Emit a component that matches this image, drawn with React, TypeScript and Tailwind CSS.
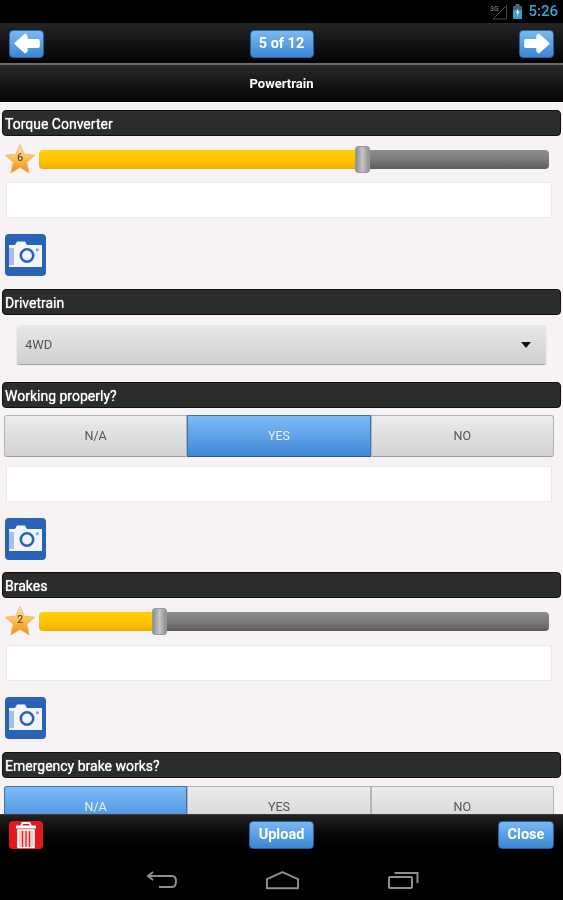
import React from 'react';

const SectionHeader: React.FC<{ title: string; className?: string }> = ({ title, className }) => (
  <div
    className={`mx-[2px] flex h-[26px] items-center rounded-[4px] border border-[#111111] bg-[#2b2d2a] pl-[2px] pt-[2px] text-[14px] leading-none text-white [text-shadow:0_0_1px_#fff] ${className ?? ''}`}
  >
    {title}
  </div>
);

const Star: React.FC<{ value: number }> = ({ value }) => (
  <div className="relative h-[30px] w-[30px] shrink-0">
    <svg viewBox="0 0 30 30" className="h-full w-full">
      <defs>
        <linearGradient id="starFill" x1="0" y1="0" x2="0" y2="1">
          <stop offset="0" stopColor="#fde9b0" />
          <stop offset="0.5" stopColor="#fbbd4f" />
          <stop offset="1" stopColor="#ef8a1c" />
        </linearGradient>
      </defs>
      <path
        d="M15 0.5 L19.2 10.2 L29.8 11.2 L21.8 18.2 L24.2 29 L15 23.4 L5.8 29 L8.2 18.2 L0.2 11.2 L10.8 10.2 Z"
        fill="url(#starFill)"
        stroke="#f4b45c"
        strokeWidth="0.8"
        strokeLinejoin="round"
      />
    </svg>
    <span className="absolute inset-0 flex items-center justify-center pb-[1px] text-[11px] text-[#4a3a20]">
      {value}
    </span>
  </div>
);

const RatingSlider: React.FC<{ value: number; percent: number; className?: string }> = ({
  value,
  percent,
  className,
}) => (
  <div className={`flex h-[30px] items-center pl-[5px] pr-[14px] ${className ?? ''}`}>
    <Star value={value} />
    <div className="relative ml-[4px] h-[19px] flex-1">
      <div className="flex h-full overflow-hidden rounded-[4px]">
        <div
          className="h-full bg-linear-to-b from-[#ffd000] via-[#ffc400] to-[#f2ae00]"
          style={{ width: `${percent}%` }}
        />
        <div className="h-full flex-1 bg-linear-to-b from-[#8e8f8d] via-[#7b7c7a] to-[#5c5d5b]" />
      </div>
      <div
        className="absolute top-[-4px] ml-[-8px] h-[27px] w-[15px] rounded-[3px] border border-[#9a9a9a] bg-linear-to-r from-[#8f8f8f] via-[#c6c6c6] to-[#8f8f8f]"
        style={{ left: `${percent}%` }}
      />
    </div>
  </div>
);

const NoteInput: React.FC<{ className?: string }> = ({ className }) => (
  <div className={`ml-[6px] mr-[11px] h-[36px] border border-[#ebe7eb] bg-white ${className ?? ''}`} />
);

const CameraButton: React.FC<{ className?: string }> = ({ className }) => (
  <div className={`ml-[5px] h-[42px] w-[41px] ${className ?? ''}`}>
    <svg viewBox="0 0 41 42" className="h-full w-full">
      <rect x="0" y="0" width="41" height="42" rx="4" fill="#2a62b8" />
      <path d="M4 11 H10 L12 7.5 H20 L22 11 H37 V33 H4 Z" fill="#f2f5fb" />
      <rect x="4" y="14" width="5" height="17" fill="#a9c0e4" />
      <circle cx="22" cy="21.5" r="6.2" fill="none" stroke="#2a62b8" strokeWidth="2.6" />
      <rect x="31" y="14.5" width="2.6" height="2.6" fill="#7d9fd6" />
    </svg>
  </div>
);

const Segments: React.FC<{ options: string[]; active: string; className?: string }> = ({
  options,
  active,
  className,
}) => (
  <div className={`ml-[4px] mr-[9px] flex h-[42px] shrink-0 ${className ?? ''}`}>
    {options.map((option, i) => (
      <div
        key={option}
        className={`flex flex-1 items-center justify-center border text-[12.5px] ${
          i === 0 ? 'rounded-l-[3px]' : ''
        } ${i === options.length - 1 ? 'rounded-r-[3px]' : ''} ${
          option === active
            ? 'border-[#3a72b4] border-b-[#1f5590] bg-linear-to-b from-[#7dbcf8] to-[#3f88d6] text-[#e6f2ff]'
            : 'border-[#b4b4b4] border-b-[#9a9a9a] bg-linear-to-b from-[#ececec] to-[#d2d2d2] text-[#555555]'
        }`}
      >
        {option}
      </div>
    ))}
  </div>
);

const BlueButton: React.FC<{ children: React.ReactNode; className?: string }> = ({
  children,
  className,
}) => (
  <div
    className={`flex items-center justify-center rounded-[4px] border border-[#2a5f9e] bg-linear-to-b from-[#7ab9f2] to-[#3a86d6] font-bold text-white ${className ?? ''}`}
  >
    {children}
  </div>
);

const ArrowIcon: React.FC<{ flip?: boolean }> = ({ flip }) => (
  <svg viewBox="0 0 30 24" className={`h-[23px] w-[28px] ${flip ? 'scale-x-[-1]' : ''}`}>
    <path
      d="M2 12 L13 2 L15 4 V8 H27 Q28 8 28 9 V15 Q28 16 27 16 H15 V20 L13 22 Z"
      fill="#ffffff"
      stroke="#ffffff"
      strokeWidth="1.4"
      strokeLinejoin="round"
    />
  </svg>
);

const TrashButton: React.FC = () => (
  <svg viewBox="0 0 34 28" className="h-[28px] w-[34px]">
    <rect x="0" y="0" width="34" height="28" rx="4" fill="#e3191c" />
    <path d="M12 5 L13.5 2 H20.5 L22 5" fill="none" stroke="#fff" strokeWidth="1.8" />
    <rect x="7" y="4.5" width="20" height="3" fill="#fff" />
    <path d="M9 9 H25 V26.5 H9 Z" fill="#f6c9c9" stroke="#fff" strokeWidth="1.6" />
    <path d="M13.5 10 V26 M17 10 V26 M20.5 10 V26" stroke="#e3191c" strokeWidth="1.2" />
  </svg>
);

export default function App() {
  return (
    <div className="flex h-[900px] w-full flex-col overflow-hidden bg-black font-['Roboto',sans-serif] blur-[0.4px]">
      {/* status bar */}
      <div className="flex h-[23px] shrink-0 items-center justify-end bg-black pr-[5px]">
        <svg viewBox="0 0 18 16" className="mr-[5px] h-[16px] w-[18px]">
          <path d="M16.5 1.5 V15 H3 Z" fill="none" stroke="#4a4a4a" strokeWidth="1" />
          <text x="0" y="6.5" fontSize="7" fill="#9a9a9a" fontFamily="Roboto, sans-serif">
            3G
          </text>
        </svg>
        <svg viewBox="0 0 9 15" className="mr-[6px] h-[15px] w-[9px]">
          <rect x="2.5" y="0" width="4" height="2" fill="#5a6a72" />
          <rect x="0" y="2" width="9" height="13" rx="1" fill="#3aa0cf" />
          <rect x="0" y="2" width="9" height="4" fill="#46626e" />
          <path d="M5 4 L3 9 H4.5 L4 13 L6.5 7.5 H5 Z" fill="#e8f6fc" />
        </svg>
        <span className="text-[15px] font-medium leading-none text-[#33a8d8]">5:26</span>
      </div>

      {/* nav bar */}
      <div className="flex h-[40px] shrink-0 items-center justify-between bg-linear-to-b from-[#252525] to-[#050505] px-[9px] pt-[1px]">
        <BlueButton className="h-[28px] w-[35px]">
          <ArrowIcon />
        </BlueButton>
        <BlueButton className="h-[28px] w-[64px] text-[14.5px] text-[#e3f0fc]">5 of 12</BlueButton>
        <BlueButton className="h-[28px] w-[35px]">
          <ArrowIcon flip />
        </BlueButton>
      </div>
      <div className="h-[2px] shrink-0 bg-[#6a6a6a]" />

      {/* page title */}
      <div className="flex h-[37px] shrink-0 items-center justify-center bg-linear-to-b from-[#2a2a2a] to-[#060606] text-[13px] font-bold text-white">
        Powertrain
      </div>

      {/* form */}
      <div className="min-h-0 flex-1 overflow-hidden bg-[#f6f2f6] pt-[8px]">
        <SectionHeader title="Torque Converter" />
        <RatingSlider value={6} percent={63.6} className="mt-[8px]" />
        <NoteInput className="mt-[8px]" />
        <CameraButton className="mt-[16px]" />

        <SectionHeader title="Drivetrain" className="mt-[13px]" />
        <div className="mx-[17px] mt-[10px] flex h-[39px] items-center justify-between rounded-[2px] bg-linear-to-b from-[#e8e8e8] to-[#d0d0d0] pl-[8px] pr-[15px] text-[13px] text-[#555555] shadow-[0_1px_1px_#a0a0a0]">
          4WD
          <div className="h-0 w-0 border-x-[5px] border-t-[6px] border-x-transparent border-t-[#111111]" />
        </div>

        <SectionHeader title="Working properly?" className="mt-[18px]" />
        <Segments options={['N/A', 'YES', 'NO']} active="YES" className="mt-[7px]" />
        <NoteInput className="mt-[9px]" />
        <CameraButton className="mt-[16px]" />

        <SectionHeader title="Brakes" className="mt-[12px]" />
        <RatingSlider value={2} percent={23.8} className="mt-[8px]" />
        <NoteInput className="mt-[9px]" />
        <CameraButton className="mt-[16px]" />

        <SectionHeader title="Emergency brake works?" className="mt-[13px]" />
        <Segments options={['N/A', 'YES', 'NO']} active="N/A" className="mt-[8px]" />
      </div>

      {/* action bar */}
      <div className="flex h-[42px] shrink-0 items-start border-t border-[#3a3a3a] bg-linear-to-b from-[#222222] to-[#000000] px-[9px] pt-[6px]">
        <div className="flex flex-1 justify-start">
          <TrashButton />
        </div>
        <BlueButton className="h-[28px] w-[65px] text-[14.5px]">Upload</BlueButton>
        <div className="flex flex-1 justify-end">
          <BlueButton className="h-[28px] w-[56px] text-[14.5px]">Close</BlueButton>
        </div>
      </div>

      {/* android nav */}
      <div className="flex h-[44px] shrink-0 items-start justify-center gap-[87px] bg-black pl-[3px] pt-[14px]">
        <svg viewBox="0 0 32 20" className="h-[20px] w-[32px]" fill="none" stroke="#8f8f8f" strokeWidth="2">
          <path d="M7 2 L2 6 L7 10 M2 6 H26 Q30 6 30 11 Q30 17 26 17 H13" />
        </svg>
        <svg viewBox="0 0 36 20" className="h-[20px] w-[35px]" fill="none" stroke="#8f8f8f" strokeWidth="2">
          <path d="M2 9 L18 2 L34 9 V18.5 H2 Z" strokeLinejoin="round" />
        </svg>
        <svg viewBox="0 0 32 20" className="h-[20px] w-[33px]" fill="none" stroke="#8f8f8f" strokeWidth="2">
          <rect x="1.5" y="7" width="23" height="11" rx="1" />
          <path d="M7 3 H30 V13" />
        </svg>
      </div>
    </div>
  );
}
